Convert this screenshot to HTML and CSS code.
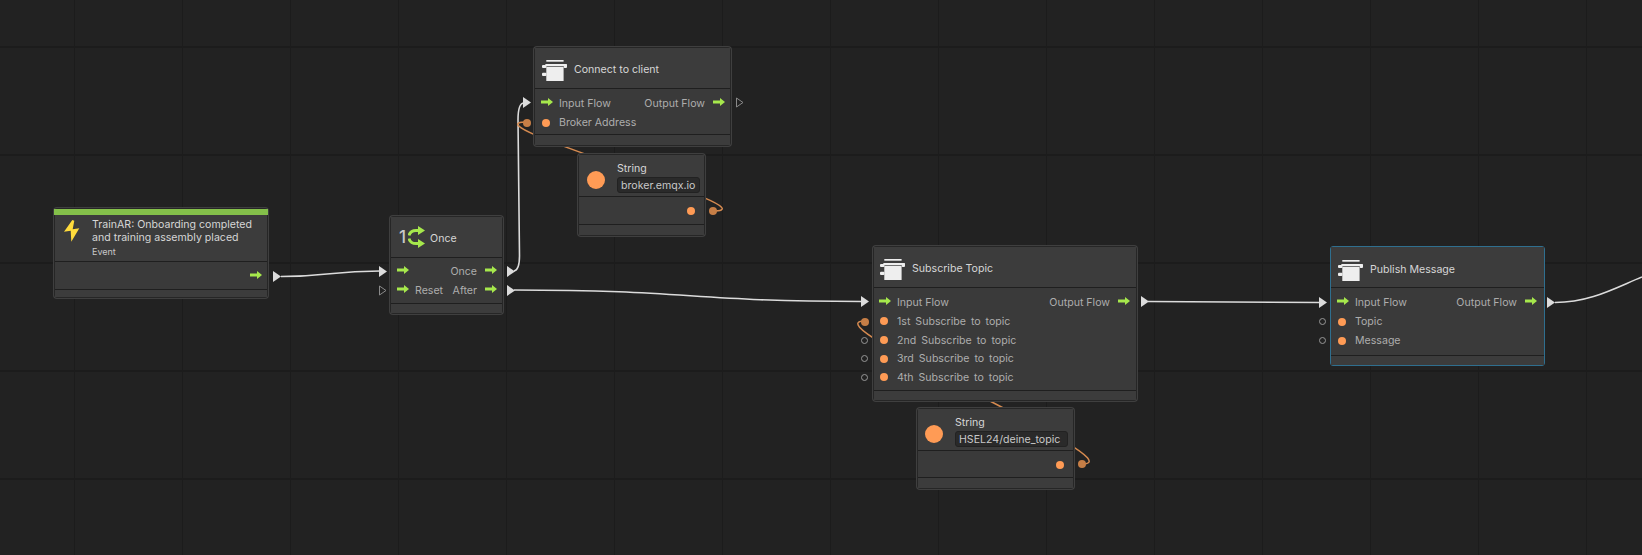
FILE: index.html
```html
<!DOCTYPE html>
<html lang="en">
<head>
    <meta charset="UTF-8">
    <title>Flow Graph</title>
    <link rel="stylesheet" href="styles.css">
</head>
<body>

<svg class="defs" width="0" height="0">
    <symbol id="flow" viewBox="0 0 12 8"><path d="M0 2.5H7V0L12 4L7 8V5.5H0Z"/></symbol>
    <symbol id="tri" viewBox="0 0 8 11"><path d="M0 0L8 5.5L0 11Z"/></symbol>
    <symbol id="tri-open" viewBox="0 0 8 11"><path d="M.5 1L7 5.5L.5 10Z"/></symbol>
    <symbol id="unit" viewBox="0 0 25 21">
        <rect x="4.3" y="0" width="17.3" height="1.7"/>
        <rect x="3.3" y="4" width="21.7" height="2" rx=".5"/>
        <rect x="0" y="5" width="4.5" height="3" rx="1"/>
        <rect x="0" y="12.7" width="4.5" height="3.3" rx="1"/>
        <rect x="21.7" y="5" width="3.3" height="3" rx="1"/>
        <rect x="4.3" y="6.7" width="17.3" height="14.3"/>
    </symbol>
</svg>

<div class="canvas">

    <svg class="wires" width="1642" height="555">
        <path class="wire" d="M281 276.500C330 276.500 330 271 380 271"/>
        <path class="wire" d="M514 271Q519.500 270 519.500 256L518 120Q518 103 524 103"/>
        <path class="wire" d="M514 290C690 290 690 301.500 862 301.500"/>
        <path class="wire" d="M1148 301.500C1200 301.500 1270 302.500 1320 302.500"/>
        <path class="wire" d="M1555 302.500C1590 302.500 1615 288 1642 277"/>
        <path class="wire-data" d="M713 211C780 211 460 122 527 122"/>
        <path class="wire-data" d="M1082 464C1142 464 805 321 865 321"/>
        <circle class="port-on" cx="713" cy="211" r="4"/>
        <circle class="port-on" cx="1082" cy="464" r="4"/>
    </svg>

    <div class="node node-event">
        <div class="accent"></div>
        <div class="head">
            <svg class="bolt" width="16" height="22" viewBox="0 0 16 22"><path d="M8.300 0L0 11.700L6.700 10.700L7.300 21.700L15.300 8.300L8.700 9.300L10.300 .7Z"/></svg>
            <div>
                <div class="title title-wrap">TrainAR: Onboarding completed and training assembly placed</div>
                <div class="subtitle">Event</div>
            </div>
        </div>
        <div class="body">
            <div class="row">
                <span></span>
                <span class="side"><svg class="flow"><use href="#flow"/></svg></span>
                <svg class="tri out"><use href="#tri"/></svg>
            </div>
        </div>
        <div class="foot"></div>
    </div>

    <div class="node node-once">
        <div class="head">
            <span class="once-num">1</span>
            <svg class="once-icon" width="17" height="24" viewBox="0 0 17 24">
                <path class="once-line" d="M1 10.500C2 6.500 5 5.500 8 5.500H11"/>
                <path d="M10 1L17 5.500L10 10Z"/>
                <path class="once-line" d="M1 13.500C2 17.500 5 18.500 8 18.500H11"/>
                <path d="M10 14L17 18.500L10 23Z"/>
            </svg>
            <div class="title">Once</div>
        </div>
        <div class="body">
            <div class="row">
                <svg class="tri in"><use href="#tri"/></svg>
                <span class="side"><svg class="flow"><use href="#flow"/></svg></span>
                <span class="side">Once <svg class="flow"><use href="#flow"/></svg></span>
                <svg class="tri out"><use href="#tri"/></svg>
            </div>
            <div class="row">
                <svg class="tri-open in"><use href="#tri-open"/></svg>
                <span class="side"><svg class="flow"><use href="#flow"/></svg> Reset</span>
                <span class="side">After <svg class="flow"><use href="#flow"/></svg></span>
                <svg class="tri out"><use href="#tri"/></svg>
            </div>
        </div>
        <div class="foot"></div>
    </div>

    <div class="node node-connect">
        <div class="head">
            <svg class="unit"><use href="#unit"/></svg>
            <div class="title">Connect to client</div>
        </div>
        <div class="body">
            <div class="row">
                <svg class="tri in"><use href="#tri"/></svg>
                <span class="side"><svg class="flow"><use href="#flow"/></svg> Input Flow</span>
                <span class="side">Output Flow <svg class="flow"><use href="#flow"/></svg></span>
                <svg class="tri-open out"><use href="#tri-open"/></svg>
            </div>
            <div class="row">
                <i class="port port-on-dot"></i>
                <span class="side"><i class="dot"></i> Broker Address</span>
            </div>
        </div>
        <div class="foot"></div>
    </div>

    <div class="node node-string node-string-a">
        <div class="head">
            <i class="dot-big"></i>
            <div>
                <div class="title">String</div>
                <div class="field">broker.emqx.io</div>
            </div>
        </div>
        <div class="body">
            <div class="row">
                <span></span>
                <span class="side"><i class="dot"></i></span>
            </div>
        </div>
        <div class="foot"></div>
    </div>

    <div class="node node-subscribe">
        <div class="head">
            <svg class="unit"><use href="#unit"/></svg>
            <div class="title">Subscribe Topic</div>
        </div>
        <div class="body">
            <div class="row">
                <svg class="tri in"><use href="#tri"/></svg>
                <span class="side"><svg class="flow"><use href="#flow"/></svg> Input Flow</span>
                <span class="side">Output Flow <svg class="flow"><use href="#flow"/></svg></span>
                <svg class="tri out"><use href="#tri"/></svg>
            </div>
            <div class="row wide">
                <i class="port port-on-dot"></i>
                <span class="side"><i class="dot"></i> 1st Subscribe to topic</span>
            </div>
            <div class="row wide">
                <i class="port"></i>
                <span class="side"><i class="dot"></i> 2nd Subscribe to topic</span>
            </div>
            <div class="row wide">
                <i class="port"></i>
                <span class="side"><i class="dot"></i> 3rd Subscribe to topic</span>
            </div>
            <div class="row wide">
                <i class="port"></i>
                <span class="side"><i class="dot"></i> 4th Subscribe to topic</span>
            </div>
        </div>
        <div class="foot"></div>
    </div>

    <div class="node node-string node-string-b">
        <div class="head">
            <i class="dot-big"></i>
            <div>
                <div class="title">String</div>
                <div class="field">HSEL24/deine_topic</div>
            </div>
        </div>
        <div class="body">
            <div class="row">
                <span></span>
                <span class="side"><i class="dot"></i></span>
            </div>
        </div>
        <div class="foot"></div>
    </div>

    <div class="node node-publish">
        <div class="head">
            <svg class="unit"><use href="#unit"/></svg>
            <div class="title">Publish Message</div>
        </div>
        <div class="body">
            <div class="row">
                <svg class="tri in"><use href="#tri"/></svg>
                <span class="side"><svg class="flow"><use href="#flow"/></svg> Input Flow</span>
                <span class="side">Output Flow <svg class="flow"><use href="#flow"/></svg></span>
                <svg class="tri out"><use href="#tri"/></svg>
            </div>
            <div class="row">
                <i class="port"></i>
                <span class="side"><i class="dot"></i> Topic</span>
            </div>
            <div class="row">
                <i class="port"></i>
                <span class="side"><i class="dot"></i> Message</span>
            </div>
        </div>
        <div class="foot"></div>
    </div>

</div>

</body>
</html>
```

FILE: styles.css
```css
html, body {
    margin: 0;
    background-color: #222222;
}

body {
    font-family: Inter, "Liberation Sans", sans-serif;
    font-size: 10.6px;
    color: #adadad;
    overflow: hidden;
}

.defs {
    position: absolute;
}

.canvas {
    position: relative;
    width: 1642px;
    height: 555px;
    overflow: hidden;
    background-color: #222222;
    background-image:
        linear-gradient(to right, #1c1c1c 1px, transparent 1px),
        linear-gradient(to bottom, #1c1c1c 2px, transparent 2px);
    background-size: 108px 108px;
    background-position: 74px 0, 0 46px;
}

.wires {
    position: absolute;
    left: 0;
    top: 0;
}

.wire {
    fill: none;
    stroke: #dcdcdc;
    stroke-width: 1.6;
}

.wire-data {
    fill: none;
    stroke: #d58a50;
    stroke-width: 1.5;
}

.port-on {
    fill: #c67e46;
}

/* nodes */
.node {
    position: absolute;
    display: flex;
    flex-direction: column;
    box-sizing: border-box;
    background-color: #3a3a3a;
    border: 1px solid #262626;
    border-radius: 3px;
    box-shadow: 0 0 0 1px #3f3f3f;
}

.node-event {
    left: 54px;
    top: 208px;
    width: 214px;
    height: 90px;
}

.node-once {
    left: 390px;
    top: 216px;
    width: 113px;
    height: 98px;
}

.node-connect {
    left: 534px;
    top: 47px;
    width: 197px;
    height: 99px;
}

.node-string-a {
    left: 578px;
    top: 154px;
    width: 127px;
    height: 82px;
}

.node-subscribe {
    left: 873px;
    top: 246px;
    width: 264px;
    height: 155px;
}

.node-string-b {
    left: 917px;
    top: 408px;
    width: 157px;
    height: 81px;
}

.node-publish {
    left: 1330px;
    top: 246px;
    width: 215px;
    height: 120px;
    border-color: #2f6f8f;
    box-shadow: none;
}

.accent {
    height: 6px;
    background-color: #84c04a;
    margin: 0 -1px;
}

.head {
    display: flex;
    align-items: center;
    gap: 7px;
    flex: none;
    height: 41px;
    box-sizing: border-box;
    padding: 0 7px;
    background-color: #3c3c3c;
    border-bottom: 1px solid #1f1f1f;
}

.node-subscribe .head {
    padding-left: 6px;
}

.node-publish .head {
    padding-top: 2px;
}

.node-event .head {
    height: 47px;
    align-items: flex-start;
    padding: 3px 9px 0;
    gap: 12px;
}

.node-string .head {
    height: 42px;
    padding: 4px 7px 0 8px;
    gap: 12px;
}

.node-string-b .head {
    padding-left: 7px;
}

.body {
    flex: 1;
    padding-top: 4px;
}

.node-event .body, .node-publish .body, .node-connect .body, .node-subscribe .body {
    padding-top: 5px;
}

.foot {
    flex: none;
    height: 10px;
    box-sizing: border-box;
    background-color: #3c3c3c;
    border-top: 1px solid #1f1f1f;
}

.node-string .foot, .node-connect .foot {
    height: 11px;
}

.node-event .foot {
    height: 8px;
}

.title {
    color: #d6d6d6;
    white-space: nowrap;
    line-height: 13px;
    margin-top: 2px;
}

.node-string .title, .title-wrap {
    margin-top: 0;
}

.title-wrap {
    width: 172px;
    white-space: normal;
}

.subtitle {
    font-size: 9px;
    line-height: 15px;
    color: #c8c8c8;
}

.field {
    width: 83px;
    height: 16px;
    line-height: 15px;
    box-sizing: border-box;
    padding-left: 3px;
    margin-top: 2px;
    background-color: #2a2a2a;
    border: 1px solid #222222;
    border-radius: 3px;
    color: #c8c8c8;
    white-space: nowrap;
}

.node-string-b .field {
    width: 113px;
}

/* rows and ports */
.row {
    position: relative;
    display: flex;
    justify-content: space-between;
    align-items: center;
    height: 19px;
    padding: 0 5px 0 6px;
}

.node-subscribe .row {
    padding: 0 6px 0 5px;
}

.node-publish .row {
    padding: 0 7px 0 6px;
}

.node-string .row {
    padding: 0 6px;
}

.wide {
    height: 18.7px;
    word-spacing: 2px;
}

.side {
    display: flex;
    align-items: center;
    gap: 6px;
}

.side + .side {
    gap: 8px;
}

.flow {
    width: 12px;
    height: 8px;
    margin-bottom: 3px;
    fill: #a6e84c;
}

.tri, .tri-open {
    position: absolute;
    top: 4px;
    width: 8px;
    height: 11px;
}

.tri {
    fill: #dcdcdc;
}

.tri-open {
    fill: none;
    stroke: #8a8a8a;
}

.in {
    left: -12px;
}

.out {
    right: -13px;
}

.node-subscribe .in {
    left: -13px;
}

.node-event .out, .node-connect .out {
    right: -14px;
}

.node-publish .out {
    right: -11px;
}

.node-connect .tri, .node-connect .tri-open, .node-subscribe .tri {
    top: 3px;
}

.dot {
    flex: none;
    width: 8px;
    height: 8px;
    margin: 0 3px 0 1px;
    border-radius: 50%;
    background-color: #ff9b55;
}

.port {
    position: absolute;
    left: -12px;
    top: 6px;
    width: 7px;
    height: 7px;
    box-sizing: border-box;
    border: 1px solid #969696;
    border-radius: 50%;
}

.node-subscribe .port {
    left: -13px;
}

.port-on-dot {
    width: 8px;
    height: 8px;
    border: none;
    background-color: #c67e46;
}

.dot-big {
    flex: none;
    width: 18px;
    height: 18px;
    margin-top: 4px;
    border-radius: 50%;
    background-color: #ff9b55;
}

/* header icons */
.unit {
    flex: none;
    width: 25px;
    height: 21px;
    margin-top: 4px;
    fill: #eeeeee;
}

.bolt {
    flex: none;
    margin-top: 2px;
    fill: #ffdb3c;
}

.node-once .head {
    padding-left: 8px;
}

.once-num {
    font-size: 17px;
    font-weight: 500;
    color: #c8c8c8;
    margin-right: -5px;
}

.once-icon {
    flex: none;
    fill: #a6e84c;
    margin-right: -2px;
}

.once-line {
    fill: none;
    stroke: #a6e84c;
    stroke-width: 3;
}
```
